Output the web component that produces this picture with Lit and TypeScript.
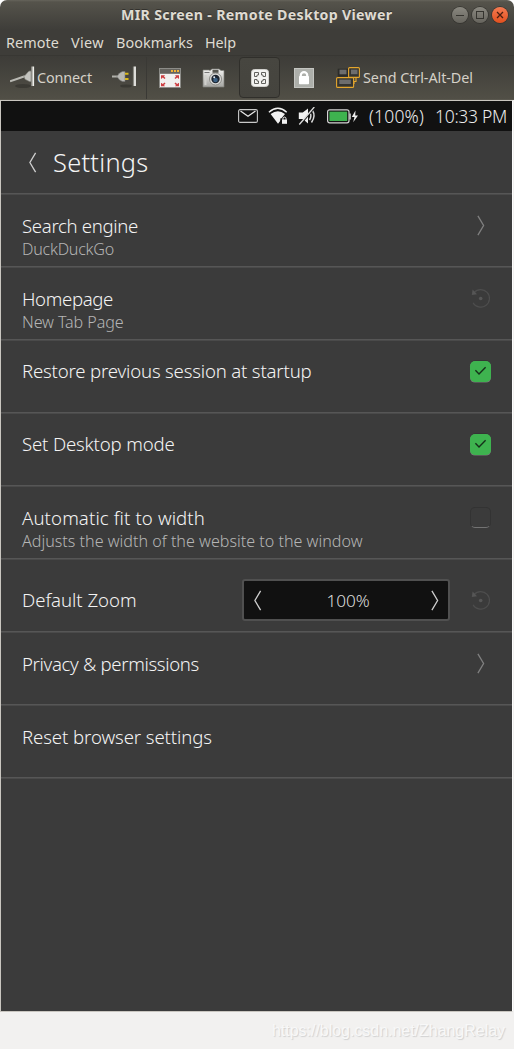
import { LitElement, html, css, svg, nothing } from "lit";
import { customElement, property, state, query } from "lit/decorators.js";

/** A single line of text whose tracking is adjusted so that it fills a given width. */
@customElement("fit-text")
class FitText extends LitElement {
  static styles = css`
    :host { display: block; white-space: pre; flex: none; }
    .run { display: inline-block; }
  `;
  @property() text = "";
  @property({ type: Number }) span = 0;
  @state() private tracking = 0;
  @query(".run") private run!: HTMLElement;

  firstUpdated() {
    const natural = this.run.getBoundingClientRect().width;
    this.tracking = (this.span - natural) / this.text.length;
  }
  render() {
    return html`<span class="run" style="letter-spacing:${this.tracking}px">${this.text}</span>`;
  }
}

const icon = (w: number, h: number, body: unknown, cls = "") =>
  html`<svg class=${"icon " + cls} width=${w} height=${h} viewBox="0 0 ${w} ${h}">${body}</svg>`;

const chevronLeft = icon(21, 21, svg`<path d="M13.600 .8 7.900 10.500l5.700 9.700" fill="none" stroke="currentColor" stroke-width="1.300"/>`, "chevron");
const chevronRight = icon(21, 21, svg`<path d="M7.900 .8 13.600 10.500 7.900 20.200" fill="none" stroke="currentColor" stroke-width="1.300"/>`, "chevron");
const resetIcon = icon(21, 21, svg`
  <path d="M3 14.700A8.800 8.800 0 1 0 4 4.600" fill="none" stroke="#4e4e4e" stroke-width="1.200"/>
  <path d="M2.600 1.600 1.800 6.900 7 6.200Z" fill="#565656"/><circle cx="10.700" cy="10.500" r="1.800" fill="#575757"/>`);
const tick = icon(21, 21, svg`<path d="M5.400 9.300 9 12.900 15.600 6.300" fill="none" stroke="#15301a" stroke-width="1.400"/>`);

const plugIn = icon(25, 25, svg`
  <ellipse cx="13" cy="21" rx="8" ry="2" fill="#2f2e2a" opacity=".55"/>
  <path d="M0 16.300C5 14.500 10 13 15 11.300" stroke="#b9b9b3" stroke-width="2" fill="none"/>
  <path d="M14 11.500 18.500 6.500q2.500-1.500 2.500 .5v9q0 1-1.500 .6l-4.500-2.300Z" fill="#c3c3be" stroke="#7c7c76" stroke-width=".6"/>
  <path d="M22.200 1.500v19.500" stroke="#b3b3ad" stroke-width="1.600"/><path d="M23.500 1.500v19.500" stroke="#efefeb" stroke-width="1.200"/>`);
const plugOut = icon(25, 25, svg`
  <ellipse cx="14" cy="21" rx="6" ry="1.600" fill="#2f2e2a" opacity=".6"/>
  <path d="M0 11.500h6" stroke="#b0b0aa" stroke-width="2"/>
  <path d="M5 11.500Q7 7.500 10.500 6.500h2.500v10h-2.500Q7 15.500 5 11.500Z" fill="#b8b8b3" stroke="#777" stroke-width=".6"/>
  <path d="M13 8.800h3.500M13 14h3.500" stroke="#d9b81c" stroke-width="2"/>
  <path d="M21.500 1.500v19.500" stroke="#8b8b84" stroke-width="1.200"/><path d="M23 1.500v19.500" stroke="#efefeb" stroke-width="1.800"/>`);
const fullscreen = icon(22, 20, svg`
  <rect x=".5" y=".5" width="21" height="19" fill="#f1f1ef" stroke="#8c8c88"/>
  <rect x="1" y="1" width="20" height="4.800" fill="#65645f"/>
  <path d="M12 3h2M15 3h2M18 3h2" stroke="#f0b236" stroke-width="2"/>
  <g fill="#cc3f42"><path d="M2 7.300h4L5 8.500l1.500 1.600-1 .9-1.700-1.500-1.300 1.200H2Z"/><path d="M20 7.300h-4l1 1.200-1.500 1.600 1 .9 1.700-1.500 1.300 1.200h.5Z"/>
  <path d="M2 18.300h4l-1-1.200 1.500-1.600-1-.9-1.700 1.500-1.300-1.200H2Z"/><path d="M20 18.300h-4l1-1.200-1.500-1.600 1-.9 1.700 1.500 1.300-1.200h.5Z"/></g>`);
const camera = icon(23, 20, svg`
  <defs><linearGradient id="cam" x2="0" y2="1"><stop offset="0" stop-color="#f4f4f2"/><stop offset="1" stop-color="#a5a5a1"/></linearGradient></defs>
  <path d="M1 2h6l1 .5 2-1.500h7l2 1.500h3v16.500H1Z" fill="url(#cam)" stroke="#7e7e7a" stroke-width=".7"/>
  <rect x="10.500" y="1.800" width="6" height="3" fill="#55554f"/><path d="M2.500 4.500h5" stroke="#777"/>
  <path d="M3.500 7v10" stroke="#cfcfcb" stroke-width="2"/>
  <circle cx="13.500" cy="11" r="6" fill="#dededb" stroke="#797975" stroke-width=".8"/>
  <circle cx="13.500" cy="11" r="4.200" fill="#1d2530"/><circle cx="13.500" cy="12" r="2.300" fill="#3c6184"/>
  <circle cx="12.200" cy="9.200" r="1" fill="#e7eef5"/>`);
const scaling = icon(18, 18, svg`
  <rect x=".5" y=".5" width="17" height="17" rx="3" fill="#f3f3f1" stroke="#d1d1cd"/>
  <g fill="none" stroke="#62625e" stroke-width="1"><path d="M3.500 7.500v-4h4v2.500h-1.500v1.500ZM14.500 7.500v-4h-4v2.500h1.500v1.500ZM3.500 10.500v4h4v-2.500h-1.500v-1.500ZM14.500 10.500v4h-4v-2.500h1.500v-1.500Z"/></g>`);
const lock = icon(20, 20, svg`
  <rect x=".5" y=".5" width="19" height="19" fill="#adafaa" stroke="#c4c5c1"/>
  <path d="M6.800 9V7a3.200 2.800 0 0 1 6.400 0v2" fill="none" stroke="#fff" stroke-width="2.200"/>
  <rect x="5" y="8" width="10" height="8.300" rx=".8" fill="#fff"/>`);
const keys = icon(25, 22, svg`
  <rect x="1.700" y="1.700" width="11" height="8" fill="#2c2c2a"/><rect x="3.500" y="2.700" width="7" height="4.600" fill="#6d6d6d"/>
  <path d="M20 10v4.500h-2M18 15v2" fill="none" stroke="#e4a62d" stroke-width="1.100"/>
  <rect x="12.600" y=".6" width="10.800" height="9.800" rx="1" fill="#343431" stroke="#e4a62d" stroke-width="1.100"/>
  <rect x="15" y="2.600" width="6.500" height="4.600" fill="#6d6d6d"/>
  <rect x=".6" y="10.600" width="17" height="9.800" rx="1" fill="#343431" stroke="#e4a62d" stroke-width="1.100"/>
  <rect x="3.300" y="12.600" width="11.500" height="4.400" fill="#6d6d6d"/>`);

const mail = icon(20, 14, svg`<rect x=".6" y=".6" width="18.800" height="12.800" rx="1.500" fill="none" stroke="#c9c9c9" stroke-width="1.100"/>
  <path d="m2.500 2 7.500 5.200L17.500 2" fill="none" stroke="#e6e6e6" stroke-width="1.300"/>`);
const wifi = icon(21, 18, svg`<path d="M.9 5.200Q10 -2.500 18.700 5.200" fill="none" stroke="#f2f2f2" stroke-width="1.400"/>
  <path d="M2.600 7Q10 1.500 17 7L13.500 11.300h-1l-.5 3L10 16.800Z" fill="#f2f2f2"/>
  <rect x="14" y="12.500" width="5" height="4.300" fill="#f2f2f2"/><path d="M15 12.800v-1.200a1.500 1.500 0 0 1 3 0v1.200" fill="none" stroke="#f2f2f2"/>`);
const muted = icon(19, 18, svg`<path d="M.8 5.500h4l5.200-4v15l-5.200-4.500H.8Z" fill="#f0f0f0"/>
  <path d="M12 5.500q2 3.500-.5 7.500M14.500 3.500q3.500 5.500-1 12" fill="none" stroke="#dadada" stroke-width="1.500"/>
  <path d="M17.300 0 2.300 17.500" stroke="#111" stroke-width="1.600"/><path d="M16.300 0 1.300 17.500" stroke="#ddd" stroke-width="1.300"/>`);
const battery = icon(32, 15, svg`<rect x=".6" y=".8" width="21.400" height="13" rx="2" fill="none" stroke="#d4d4d4" stroke-width="1.200"/>
  <rect x="2.400" y="2.600" width="17.800" height="9.400" fill="#3eb34f"/><rect x="22.300" y="4.500" width="1.500" height="6" fill="#ccc"/>
  <path d="M28.500 1.500 24.800 8h2.700L26.200 13.200l4.800-6.700h-2.800Z" fill="#eee"/>`);

interface Row {
  title: string; width: number; sub?: string; subWidth?: number;
  kind: "link" | "reset" | "on" | "off" | "zoom" | "none";
}
const rows: Row[] = [
  { title: "Search engine", width: 116, sub: "DuckDuckGo", subWidth: 92, kind: "link" },
  { title: "Homepage", width: 91, sub: "New Tab Page", subWidth: 101.5, kind: "reset" },
  { title: "Restore previous session at startup", width: 289.5, kind: "on" },
  { title: "Set Desktop mode", width: 152.5, kind: "on" },
  { title: "Automatic fit to width", width: 183, sub: "Adjusts the width of the website to the window", subWidth: 340.5, kind: "off" },
  { title: "Default Zoom", width: 114.5, kind: "zoom" },
  { title: "Privacy & permissions", width: 177, kind: "link" },
  { title: "Reset browser settings", width: 190, kind: "none" },
];

@customElement("app-root")
class AppRoot extends LitElement {
  static styles = css`
    :host { display: flex; flex-direction: column; width: 514px; height: 1049px; background: #f2f1f0;
      font-family: "Noto Sans", "Open Sans", sans-serif; overflow: hidden; }
    * { box-sizing: border-box; }
    .icon { display: block; flex: none; }
    .head { background: #fff; flex: none; }
    .chrome { height: 55px; border-radius: 7px 7px 0 0; color: #dfdbd2;
      background: linear-gradient(#66645b 0, #55534b 2px, #3e3d39 30px, #3e3d39 100%); }
    .titlebar { display: flex; align-items: center; height: 30px; padding: 0 6px 0 121px; justify-content: space-between; }
    .title { font-size: 14.200px; font-weight: 700; line-height: 30px; text-shadow: 0 -1px #33322e; }
    .buttons { display: flex; gap: 4px; }
    .btn { width: 16px; height: 16px; border-radius: 50%; background: linear-gradient(#8a8880, #66645d);
      box-shadow: 0 0 0 .7px #33322e; color: #35342f; }
    .btn.close { background: linear-gradient(#f47b52, #e2501e); color: #4b1e10; }
    .menu { display: flex; gap: 12px; padding-left: 6px; font-size: 14.400px; line-height: 25px; }
    .toolbar { display: flex; align-items: center; height: 45px; flex: none; padding-left: 10px; color: #d5d1c8;
      background: linear-gradient(#3d3c38, #514f46); border-top: 1px solid #383733; border-bottom: 1px solid #59574e; font-size: 14.400px; }
    .toolbar .label { line-height: 42px; margin-left: 2px; }
    .sep { width: 1px; height: 42px; background: #3a3935; margin: 0 12px 0 9px; }
    .gap-a { margin-left: 20px; }
    .gap-b { margin-left: 21px; }
    .active { display: flex; align-items: center; justify-content: center; width: 41px; height: 41px; border: 1px solid #302f2b;
      border-radius: 4px; background: linear-gradient(#474640, #45443e); margin: 0 14px; }
    .gap-c { margin-left: 22px; }
    .screen { display: flex; flex-direction: column; height: 912px; flex: none; margin-right: 1px;
      border: 1px solid #c9c6c0; border-right-color: #fff; background: #3b3b3b; color: #eee; }
    .status { display: flex; align-items: center; height: 30px; flex: none; background: #111; padding-left: 237px;
      font-weight: 300; font-size: 17.500px; color: #ececec; }
    .status .wifi { margin-left: 10px; }
    .status .mute { margin-left: 9px; }
    .status .batt { margin-left: 10px; }
    .status .pct { margin-left: 10px; }
    .status .clock { margin-left: 11px; }
    .header { display: flex; align-items: center; height: 64px; flex: none; padding: 0 0 0 21px; gap: 10px;
      border-bottom: 1px solid #4a4a4a; box-shadow: inset 0 -1px #565656; font-weight: 300; font-size: 25.400px; line-height: 63px; color: #f4f4f4; }
    .header .chevron, .stepper .chevron { color: #cfcfcf; }
    .row { display: flex; align-items: flex-start; justify-content: space-between; height: 73px; flex: none;
      padding: 20px 21px 0; border-bottom: 1px solid #4a4a4a; box-shadow: inset 0 -1px #565656; color: #808080; }
    .name { font-weight: 300; font-size: 18.600px; line-height: 21px; color: #f4f4f4; }
    .row.on .name { line-height: 19px; }
    .texts { flex: 1; }
    .sub { font-weight: 300; font-size: 16.100px; line-height: 24px; color: #b5b5b5; margin-top: 1px; }
    .row.zoom { padding-top: 19px; gap: 20px; }
    .row.zoom .name { line-height: 41px; }
    .row.zoom > .icon { margin-top: 11px; }
    .stepper { display: flex; align-items: center; justify-content: space-between; width: 208px; height: 42px; padding: 0 3px;
      background: #111; border: 2px solid #505050; border-radius: 3px; font-weight: 300; font-size: 17.200px; color: #ddd; }
    .amount { padding-left: 4px; }
    .check { width: 21px; height: 21px; border-radius: 5px; flex: none; }
    .check.on { background: #3eb34f; box-shadow: 0 .6px 0 #777, 0 -.5px 0 #2f2f2f; }
    .check.off { border: 1px solid #333; border-bottom-color: #737373; }
    .footer { flex: 1; display: flex; justify-content: flex-end; padding: 7px 9px 0 0; font-family: "Liberation Sans", Arial, sans-serif;
      font-size: 16px; line-height: 24px; color: #f8f8f8; text-shadow: 1px 1px 1px #d0d0d0; }
  `;

  private text(cls: string, text: string, span: number) {
    return html`<fit-text class=${cls} .text=${text} .span=${span}></fit-text>`;
  }

  private trailing(kind: Row["kind"]) {
    switch (kind) {
      case "link": return chevronRight;
      case "reset": return resetIcon;
      case "on": return html`<div class="check on">${tick}</div>`;
      case "off": return html`<div class="check off"></div>`;
      case "zoom": return html`<div class="stepper">${chevronLeft}${this.text("amount", "100%", 43)}${chevronRight}</div>${resetIcon}`;
      default: return nothing;
    }
  }

  render() {
    return html`
      <div class="head"><div class="chrome">
        <div class="titlebar">
          ${this.text("title", "MIR Screen - Remote Desktop Viewer", 271.5)}
          <div class="buttons">
            <div class="btn">${icon(16, 16, svg`<path d="M4 8.500h8" stroke="currentColor"/>`)}</div>
            <div class="btn">${icon(16, 16, svg`<rect x="4.500" y="4.500" width="7" height="7" fill="none" stroke="currentColor"/>`)}</div>
            <div class="btn close">${icon(16, 16, svg`<path d="m5 5 6 6M11 5l-6 6" stroke="currentColor" stroke-width="1.300"/>`)}</div>
          </div>
        </div>
        <div class="menu">
          ${this.text("", "Remote", 53)}${this.text("", "View", 33)}${this.text("", "Bookmarks", 77)}${this.text("", "Help", 31)}
        </div>
      </div></div>
      <div class="toolbar">
        ${plugIn}${this.text("label", "Connect", 55)}
        <span class="gap-a">${plugOut}</span>
        <span class="sep"></span>
        ${fullscreen}
        <span class="gap-b">${camera}</span>
        <span class="active">${scaling}</span>
        ${lock}
        <span class="gap-c">${keys}</span>
        ${this.text("label", "Send Ctrl-Alt-Del", 110)}
      </div>
      <div class="screen">
        <div class="status">
          ${mail}<span class="wifi">${wifi}</span><span class="mute">${muted}</span><span class="batt">${battery}</span>
          ${this.text("pct", "(100%)", 55)}${this.text("clock", "10:33 PM", 72)}
        </div>
        <div class="header">${chevronLeft}${this.text("", "Settings", 95.5)}</div>
        ${rows.map(r => html`
          <div class="row ${r.kind}">
            <div class="texts">
              ${this.text("name", r.title, r.width)}
              ${r.sub ? this.text("sub", r.sub, r.subWidth!) : nothing}
            </div>
            ${this.trailing(r.kind)}
          </div>`)}
      </div>
      <div class="footer">${this.text("", "https://blog.csdn.net/ZhangRelay", 233)}</div>
    `;
  }
}
